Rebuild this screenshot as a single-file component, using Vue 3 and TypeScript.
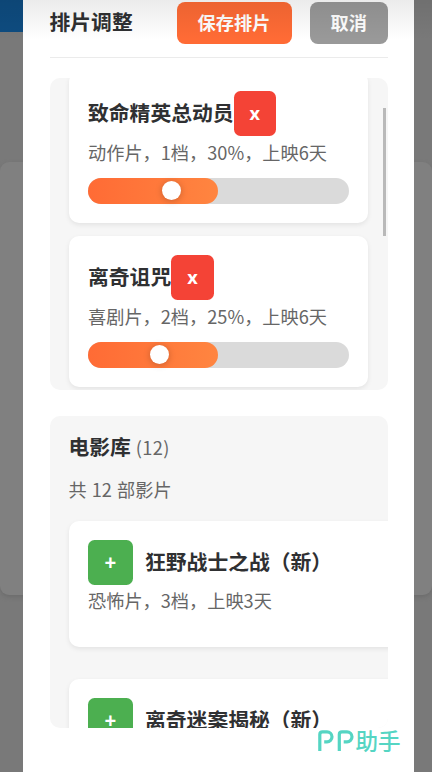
<script setup lang="ts">
interface ScheduledMovie {
  title: string
  detail: string
  position: number
}

interface LibraryMovie {
  title: string
  detail?: string
}

const scheduled: ScheduledMovie[] = [
  { title: '致命精英总动员', detail: '动作片，1档，30%，上映6天', position: 31.9 },
  { title: '离奇诅咒', detail: '喜剧片，2档，25%，上映6天', position: 27.5 },
]

const library: LibraryMovie[] = [
  { title: '狂野战士之战（新）', detail: '恐怖片，3档，上映3天' },
  { title: '离奇迷案揭秘（新）' },
]
</script>

<template>
  <div class="screen">
    <div class="backdrop">
      <div class="backdrop-bar"></div>
      <div class="backdrop-card"></div>
    </div>
    <main class="modal">
      <header class="header">
        <h1 class="heading">排片调整</h1>
        <button class="btn save">保存排片</button>
        <button class="btn cancel">取消</button>
      </header>

      <section class="panel schedule">
        <article v-for="m in scheduled" :key="m.title" class="card">
          <div class="row">
            <h2 class="name">{{ m.title }}</h2>
            <button class="square remove">x</button>
          </div>
          <p class="detail">{{ m.detail }}</p>
          <div class="track">
            <div class="fill"></div>
            <div class="thumb" :style="{ left: m.position + '%' }"></div>
          </div>
        </article>
        <div class="scrollbar"></div>
      </section>

      <section class="panel library">
        <h2 class="library-title">电影库 <span class="count">(12)</span></h2>
        <p class="total">共 12 部影片</p>
        <article v-for="m in library" :key="m.title" class="card wide">
          <div class="row">
            <button class="square add">+</button>
            <h2 class="name">{{ m.title }}</h2>
          </div>
          <p v-if="m.detail" class="detail">{{ m.detail }}</p>
        </article>
      </section>
    </main>
    <div class="status-shade"></div>
    <div class="watermark">
      <svg class="pp" viewBox="0 0 36 22" aria-hidden="true">
        <path d="M1.8 21V4.5Q1.8 1.8 4.5 1.8H9A5 5 0 0 1 9 11.8H6.2" />
        <path d="M21.3 21V4.5Q21.3 1.8 24 1.8H29A5 5 0 0 1 29 11.8H25.7" />
      </svg>
      <span>助手</span>
    </div>
  </div>
</template>

<style>
body {
  margin: 0;
}
</style>

<style scoped>
.screen {
  position: relative;
  width: 432px;
  height: 772px;
  overflow: hidden;
  background: #797979;
  font-family: "Noto Sans CJK SC", sans-serif;
  color: #2f3032;
}
.backdrop {
  position: absolute;
  inset: 0;
}
.backdrop-bar {
  width: 23px;
  height: 32px;
  background: #0e4c80;
}
.backdrop-card {
  margin-top: 130px;
  height: 433px;
  border-radius: 9px;
  background: #808080;
  box-shadow: 0 2px 4px #6c6c6c;
}
.modal {
  position: relative;
  box-sizing: border-box;
  width: 391px;
  height: 772px;
  margin-left: 23px;
  padding: 2px 26px 0 26.5px;
  background: #fff;
}
h1,
h2,
p {
  margin: 0;
}
.header {
  display: flex;
  align-items: flex-start;
  height: 55px;
  border-bottom: 1px solid #ebebeb;
}
.heading {
  flex: 1;
  font-size: 20.8px;
  line-height: 39px;
  font-weight: 700;
}
.btn {
  height: 42px;
  padding: 0 0 3px;
  border: 0;
  border-radius: 8px;
  color: #fff;
  font: 700 18.2px/38px "Noto Sans CJK SC", sans-serif;
}
.save {
  width: 115px;
  background: #ff6b35;
}
.cancel {
  width: 78.5px;
  margin-left: 18px;
  background: #999;
}
.panel {
  position: relative;
  box-sizing: border-box;
  height: 312px;
  padding: 0 20px 0 19px;
  overflow: hidden;
  border-radius: 10px;
  background: #f6f6f6;
}
.schedule {
  display: flex;
  flex-direction: column;
  gap: 13px;
  margin-top: 20px;
}
.schedule .card:first-child {
  margin-top: -6px;
}
.card {
  box-sizing: border-box;
  flex: none;
  height: 151px;
  padding: 19px 19.5px;
  border-radius: 10px;
  background: #fff;
  box-shadow: 0 2px 5px rgba(0, 0, 0, 0.08);
}
.row {
  display: flex;
  align-items: center;
  height: 45px;
}
.name {
  padding-bottom: 3px;
  font-size: 20.8px;
  line-height: 30px;
  font-weight: 700;
  white-space: nowrap;
}
.square {
  height: 45px;
  padding: 0;
  border: 0;
  border-radius: 6.5px;
  color: #fff;
  font: 700 18.2px/45px "Open Sans", "Noto Sans CJK SC", sans-serif;
}
.remove {
  width: 42.5px;
  background: #f44336;
}
.add {
  width: 44.5px;
  margin-right: 12.5px;
  background: #4caf50;
  font-size: 20.5px;
}
.detail {
  color: #666;
  font-size: 18.2px;
  line-height: 27px;
  margin-top: 2.5px;
  white-space: nowrap;
}
.track {
  position: relative;
  height: 26px;
  margin-top: 12px;
  border-radius: 13px;
  background: #dadada;
}
.fill {
  width: 50%;
  height: 100%;
  border-radius: 13px;
  background: linear-gradient(90deg, #ff6b35, #ff8540);
}
.thumb {
  position: absolute;
  top: 3.5px;
  width: 19px;
  height: 19px;
  margin-left: -9.5px;
  border-radius: 50%;
  background: #fff;
  box-shadow: 0 1px 7px rgba(0, 0, 0, 0.22);
}
.scrollbar {
  position: absolute;
  top: 30px;
  right: 2.5px;
  width: 2.5px;
  height: 128px;
  background: #b9b9b9;
}
.library {
  margin-top: 26px;
  padding-top: 15px;
}
.library-title {
  font-size: 20.8px;
  line-height: 31px;
  font-weight: 700;
}
.count {
  color: #666;
  font-size: 18.2px;
  font-weight: 400;
  letter-spacing: 0.45px;
}
.total {
  margin-top: 12.5px;
  color: #666;
  font-size: 18.2px;
  line-height: 27px;
  word-spacing: 1px;
}
.wide {
  width: 340px;
  height: 126px;
  margin-top: 32px;
}
.total + .wide {
  margin-top: 18px;
}
.status-shade {
  position: absolute;
  top: 0;
  left: 0;
  width: 100%;
  height: 40px;
  background: linear-gradient(rgba(0, 0, 0, 0.08), transparent);
}
.watermark {
  position: absolute;
  left: 318px;
  top: 727px;
  display: flex;
  align-items: flex-start;
  color: #55d5c3;
  font-size: 22.5px;
  line-height: 26px;
  font-weight: 500;
}
.pp {
  width: 36px;
  height: 22px;
  margin: 3px 1.5px 0 0;
  fill: none;
  stroke: currentColor;
  stroke-width: 3.2;
}
</style>
